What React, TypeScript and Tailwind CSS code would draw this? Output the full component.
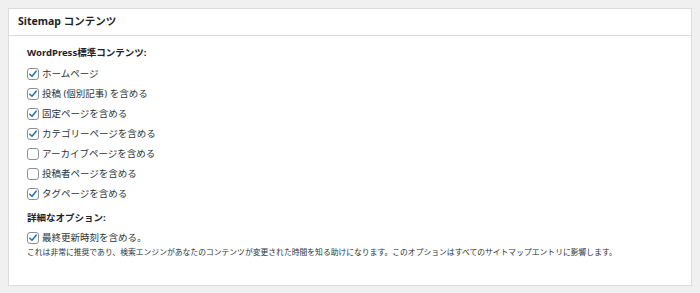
const font = { fontFamily: '"Noto Sans", "Noto Sans CJK JP", sans-serif' };

function Check({ checked, label }: { checked: boolean; label: string }) {
  return (
    <label className="flex items-center h-[20px] gap-[3px] text-[9.5px] text-[#2c3338]">
      <span className="w-[12px] h-[12px] rounded-[3px] border border-[#8c8f94] bg-white flex items-center justify-center shrink-0">
        {checked && (
          <svg viewBox="0 0 12 12" className="w-[10px] h-[10px]">
            <path d="M2.2 6.2 L4.8 8.8 L9.8 2.6" fill="none" stroke="#2271b1" strokeWidth="1.8" strokeLinecap="round" strokeLinejoin="round" />
          </svg>
        )}
      </span>
      <span>{label}</span>
    </label>
  );
}

export default function App() {
  const items: [boolean, string][] = [
    [true, "ホームページ"],
    [true, "投稿 (個別記事) を含める"],
    [true, "固定ページを含める"],
    [true, "カテゴリーページを含める"],
    [false, "アーカイブページを含める"],
    [false, "投稿者ページを含める"],
    [true, "タグページを含める"],
  ];

  return (
    <div className="w-[700px] h-[293px] bg-[#f0f0f1] p-[8px] pb-[7px]" style={font}>
      <div className="h-full bg-white border border-[#dcdcde] flex flex-col">
        <div className="h-[27px] border-b border-[#dcdcde] flex items-center px-[9px] text-[10.5px] font-bold text-[#1d2327]">
          Sitemap コンテンツ
        </div>
        <div className="px-[18px] pt-[8px] flex flex-col">
          <div className="h-[18px] flex items-center text-[9.5px] font-bold text-[#1d2327] mb-[2px]">
            WordPress標準コンテンツ:
          </div>
          {items.map(([c, l]) => (
            <Check key={l} checked={c} label={l} />
          ))}
          <div className="h-[18px] flex items-center text-[9.5px] font-bold text-[#1d2327] mt-[5px] mb-[1px]">
            詳細なオプション:
          </div>
          <Check checked label="最終更新時刻を含める。" />
          <p className="text-[7.8px] text-[#2c3338] leading-[10px] -mt-[1px]">
            これは非常に推奨であり、検索エンジンがあなたのコンテンツが変更された時間を知る助けになります。このオプションはすべてのサイトマップエントリに影響します。
          </p>
        </div>
      </div>
    </div>
  );
}
